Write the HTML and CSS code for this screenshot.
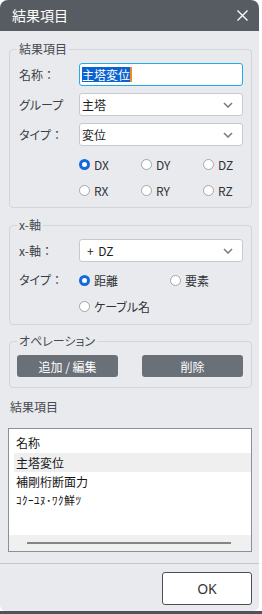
FILE: index.html
```html
<!DOCTYPE html>
<html lang="ja">
<head>
  <meta charset="UTF-8">
  <meta name="viewport" content="width=device-width, initial-scale=1.0">
  <title>結果項目</title>
  <link rel="stylesheet" href="styles.css">
</head>
<body>
  <div class="dialog">
    <div class="titlebar">
      <span class="title">結果項目</span>
      <svg class="close" width="11" height="11" viewBox="0 0 11 11">
        <path d="M0.5 0.5 L10.5 10.5 M10.5 0.5 L0.5 10.5" stroke="#fff" stroke-width="1.3" fill="none"/>
      </svg>
    </div>

    <div class="content">
      <fieldset class="group">
        <legend>結果項目</legend>
        <div class="row">
          <label>名称<span class="colon">：</span></label>
          <div class="field focus"><span class="selected">主塔変位</span></div>
        </div>
        <div class="row">
          <label>グループ</label>
          <div class="field select">主塔
            <svg class="chevron" width="10" height="6" viewBox="0 0 10 6"><path d="M1 1 L5 5 L9 1" stroke="#7a7e84" stroke-width="1.6" fill="none"/></svg>
          </div>
        </div>
        <div class="row last">
          <label>タイプ<span class="colon">：</span></label>
          <div class="field select">変位
            <svg class="chevron" width="10" height="6" viewBox="0 0 10 6"><path d="M1 1 L5 5 L9 1" stroke="#7a7e84" stroke-width="1.6" fill="none"/></svg>
          </div>
        </div>
        <div class="radios three">
          <div class="radio"><span class="dot checked"></span>DX</div>
          <div class="radio"><span class="dot"></span>DY</div>
          <div class="radio"><span class="dot"></span>DZ</div>
          <div class="radio"><span class="dot"></span>RX</div>
          <div class="radio"><span class="dot"></span>RY</div>
          <div class="radio"><span class="dot"></span>RZ</div>
        </div>
      </fieldset>

      <fieldset class="group axis">
        <legend>x-軸</legend>
        <div class="row last">
          <label>x-軸<span class="colon">：</span></label>
          <div class="field select"><span class="axis-value">+ DZ</span>
            <svg class="chevron" width="10" height="6" viewBox="0 0 10 6"><path d="M1 1 L5 5 L9 1" stroke="#7a7e84" stroke-width="1.6" fill="none"/></svg>
          </div>
        </div>
        <div class="type-row">
          <label>タイプ<span class="colon">：</span></label>
          <div class="radios two">
            <div class="radio"><span class="dot checked"></span>距離</div>
            <div class="radio"><span class="dot"></span>要素</div>
            <div class="radio"><span class="dot"></span>ケーブル名</div>
          </div>
        </div>
      </fieldset>

      <fieldset class="group ops">
        <legend>オペレーション</legend>
        <div class="buttons">
          <button class="op-button">追加 / 編集</button>
          <button class="op-button">削除</button>
        </div>
      </fieldset>

      <div class="list-label">結果項目</div>
      <div class="list">
        <div class="list-items">
          <div class="list-row header">名称</div>
          <div class="list-row active">主塔変位</div>
          <div class="list-row">補剛桁断面力</div>
          <div class="list-row garbled">ｺｸｰﾕﾇ･ﾜｸ鮮ﾂ</div>
        </div>
        <div class="hscroll"><div class="thumb"></div></div>
      </div>
    </div>

    <div class="footer">
      <button class="ok">OK</button>
    </div>
  </div>
  <div class="taskbar"></div>
</body>
</html>
```

FILE: styles.css
```css
body {
  margin: 0;
  background-color: #fff;
  font-family: "Noto Sans CJK JP", "Noto Sans", sans-serif;
  font-feature-settings: "palt";
}
.dialog {
  width: 259px;
  height: 611px;
  background-color: #e9eaee;
  border-radius: 8px 8px 6px 6px;
  display: flex;
  flex-direction: column;
  overflow: hidden;
}
.titlebar {
  height: 31px;
  flex-shrink: 0;
  background-color: #575c63;
  color: #fff;
  font-size: 14px;
  display: flex;
  align-items: center;
  justify-content: space-between;
  padding: 0 11px 1px 12px;
  box-sizing: border-box;
}
.content {
  flex: 1;
  padding: 0 7px 0 8px;
}
.group {
  margin: 11px 0 0 1px;
  border: 1px solid #d2d5da;
  border-radius: 4px;
  padding: 7px 8px 4px 9px;
  min-width: 0;
}
.group legend {
  font-size: 12px;
  line-height: 14px;
  color: #474a4f;
  padding: 0 2px;
  margin-left: -2px;
}
.row {
  display: flex;
  align-items: center;
  height: 23px;
  margin-bottom: 7px;
}
.row.last {
  margin-bottom: 0;
}
label {
  width: 60px;
  flex-shrink: 0;
  font-size: 12px;
  color: #3c3f44;
}
.colon {
  font-feature-settings: normal;
}
.field {
  width: 164px;
  height: 23px;
  box-sizing: border-box;
  border: 1px solid #c6cad0;
  border-radius: 3px;
  background-color: #fff;
  font-size: 12px;
  color: #1e1e1e;
  padding-left: 2px;
  display: flex;
  align-items: center;
}
.field.focus {
  border-color: #22aaea;
}
.selected {
  background-color: #0b63d0;
  color: #fff;
  line-height: 15px;
  border-right: 2px solid #f08a24;
}
.select {
  justify-content: space-between;
  padding-right: 9px;
}
.axis-value {
  padding-left: 5px;
  word-spacing: 2px;
}
.radios {
  display: grid;
  grid-auto-rows: 26px;
  padding-top: 5px;
}
.radios.three {
  margin-left: 60px;
  grid-template-columns: 62px 62px 40px;
}
.radios.two {
  grid-template-columns: 91px 70px;
  padding-top: 0;
}
.radio {
  display: flex;
  align-items: center;
  font-size: 12px;
  color: #2f3237;
  white-space: nowrap;
}
.dot {
  width: 11px;
  height: 11px;
  box-sizing: border-box;
  border: 1px solid #a3a6ab;
  border-radius: 50%;
  background-color: #fff;
  margin-right: 4px;
}
.dot.checked {
  border: 3px solid #1668dc;
}
.group.axis {
  margin-top: 10px;
  padding-bottom: 5px;
}
.type-row {
  display: flex;
  padding-top: 5px;
}
.type-row label {
  height: 26px;
  line-height: 26px;
}
.group.ops {
  margin-top: 9px;
  padding-bottom: 10px;
}
.buttons {
  display: flex;
  gap: 24px;
  margin-left: -2px;
}
.op-button {
  width: 102px;
  height: 22px;
  border: none;
  border-radius: 3px;
  background-color: #6a7078;
  color: #fff;
  font-family: inherit;
  font-feature-settings: "palt";
  font-size: 12px;
  padding: 0;
}
.list-label {
  margin: 11px 0 0 2px;
  font-size: 12px;
  line-height: 16px;
  color: #474a4f;
}
.list {
  margin-top: 13px;
  height: 124px;
  box-sizing: border-box;
  border: 1px solid #8c9096;
  background-color: #fff;
  display: flex;
  flex-direction: column;
}
.list-items {
  flex: 1;
  padding: 4px 0 0 5px;
}
.list-row {
  height: 19px;
  line-height: 19px;
  padding-left: 2px;
  font-size: 12px;
  color: #151515;
}
.list-row.header {
  margin-bottom: 1px;
}
.list-row.active {
  background-color: #efefef;
}
.list-row.garbled {
  font-size: 11px;
  letter-spacing: 0.5px;
}
.hscroll {
  height: 16px;
  background-color: #f0f0f0;
  display: flex;
  align-items: center;
}
.thumb {
  height: 2px;
  background-color: #858585;
  margin: 0 20px 0 18px;
  flex: 1;
}
.footer {
  border-top: 1px solid #c3c7cc;
  margin-top: 10px;
  height: 48px;
  flex-shrink: 0;
  display: flex;
  justify-content: flex-end;
  align-items: flex-start;
  padding: 8px 7px 0 0;
  box-sizing: border-box;
}
.ok {
  width: 90px;
  height: 33px;
  border: 1px solid #4c4f53;
  border-radius: 3px;
  background-color: #fff;
  font-family: "Noto Sans", sans-serif;
  font-size: 14px;
  color: #333;
}
.taskbar {
  height: 3px;
  background-color: #4f5257;
}
```
